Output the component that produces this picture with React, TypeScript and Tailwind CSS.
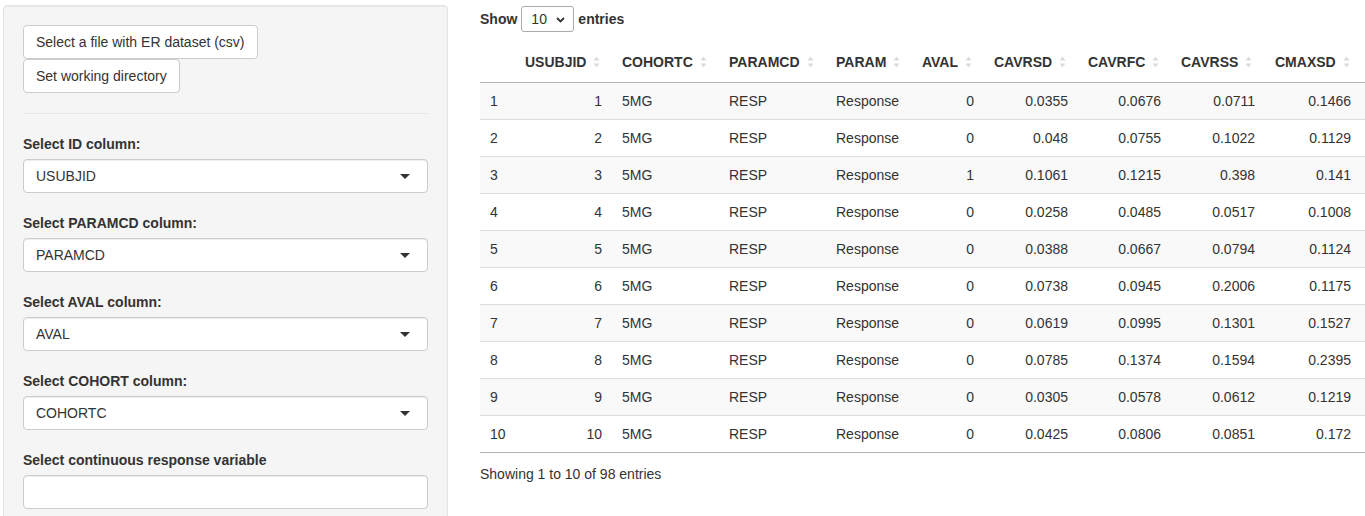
import React from "react";

const font = { fontFamily: '"Liberation Sans", Arial, Helvetica, sans-serif' };

const rows: (string | number)[][] = [
  [1, 1, "5MG", "RESP", "Response", 0, "0.0355", "0.0676", "0.0711", "0.1466"],
  [2, 2, "5MG", "RESP", "Response", 0, "0.048", "0.0755", "0.1022", "0.1129"],
  [3, 3, "5MG", "RESP", "Response", 1, "0.1061", "0.1215", "0.398", "0.141"],
  [4, 4, "5MG", "RESP", "Response", 0, "0.0258", "0.0485", "0.0517", "0.1008"],
  [5, 5, "5MG", "RESP", "Response", 0, "0.0388", "0.0667", "0.0794", "0.1124"],
  [6, 6, "5MG", "RESP", "Response", 0, "0.0738", "0.0945", "0.2006", "0.1175"],
  [7, 7, "5MG", "RESP", "Response", 0, "0.0619", "0.0995", "0.1301", "0.1527"],
  [8, 8, "5MG", "RESP", "Response", 0, "0.0785", "0.1374", "0.1594", "0.2395"],
  [9, 9, "5MG", "RESP", "Response", 0, "0.0305", "0.0578", "0.0612", "0.1219"],
  [10, 10, "5MG", "RESP", "Response", 0, "0.0425", "0.0806", "0.0851", "0.172"],
];

const columns = [
  { name: "", width: "w-[35px]", right: false },
  { name: "USUBJID", width: "w-[97px]", right: true },
  { name: "COHORTC", width: "w-[107px]", right: false },
  { name: "PARAMCD", width: "w-[107px]", right: false },
  { name: "PARAM", width: "w-[86px]", right: false },
  { name: "AVAL", width: "w-[72px]", right: true },
  { name: "CAVRSD", width: "w-[94px]", right: true },
  { name: "CAVRFC", width: "w-[93px]", right: true },
  { name: "CAVRSS", width: "w-[94px]", right: true },
  { name: "CMAXSD", width: "w-[96px]", right: true },
];

function SortIcon() {
  return (
    <svg width="7" height="12" viewBox="0 0 7 12" className="ml-[7px] shrink-0">
      <path d="M3.5 0.5 L6.5 4.5 L0.5 4.5 Z" fill="#dcdcdc" />
      <path d="M3.5 11.5 L6.5 7.5 L0.5 7.5 Z" fill="#dcdcdc" />
    </svg>
  );
}

function SelectBox({ value, caret = true }: { value: string; caret?: boolean }) {
  return (
    <div className="relative h-[34px] w-full rounded-[4px] border border-[#cccccc] bg-white px-[12px] py-[6px] text-[14px] leading-[20px] text-[#333333] shadow-[inset_0_1px_1px_rgba(0,0,0,0.075)]">
      {value}
      {caret && (
        <span className="absolute right-[17px] top-[14px] h-0 w-0 border-x-[5px] border-t-[5px] border-x-transparent border-t-[#333333]" />
      )}
    </div>
  );
}

function Field({ label, value, caret }: { label: string; value: string; caret?: boolean }) {
  return (
    <div className="mb-[20px]">
      <label className="mb-[5px] block text-[14px] font-bold leading-[20px] text-[#333333]">{label}</label>
      <SelectBox value={value} caret={caret} />
    </div>
  );
}

export default function App() {
  return (
    <div className="flex bg-white text-[14px] leading-[20px] text-[#333333]" style={font}>
      <div className="ml-[3px] mt-[5px] w-[445px] shrink-0 rounded-[4px] border border-[#e3e3e3] bg-[#f5f5f5] p-[19px] shadow-[inset_0_1px_1px_rgba(0,0,0,0.05)]">
        <div className="flex flex-col items-start">
          <button className="h-[34px] rounded-[4px] border border-[#cccccc] bg-white px-[12px] text-[14px] text-[#333333]">
            Select a file with ER dataset (csv)
          </button>
          <button className="h-[34px] rounded-[4px] border border-[#cccccc] bg-white px-[12px] text-[14px] text-[#333333]">
            Set working directory
          </button>
        </div>
        <hr className="my-[20px] border-t border-[#e6e6e6]" />
        <Field label="Select ID column:" value="USUBJID" />
        <Field label="Select PARAMCD column:" value="PARAMCD" />
        <Field label="Select AVAL column:" value="AVAL" />
        <Field label="Select COHORT column:" value="COHORTC" />
        <Field label="Select continuous response variable" value="" caret={false} />
      </div>

      <div className="ml-[32px] min-w-0 flex-1 overflow-hidden pt-[6px]">
        <div className="flex items-center font-bold">
          <span>Show</span>
          <div className="relative ml-[4px] mr-[4px] flex h-[26px] w-[53px] items-center rounded-[3px] border border-[#aaaaaa] bg-white pl-[9px] font-normal">
            10
            <svg width="9" height="6" viewBox="0 0 9 6" className="absolute right-[8px] top-[10px]">
              <path d="M1 1 L4.5 4.5 L8 1" fill="none" stroke="#333333" strokeWidth="1.8" />
            </svg>
          </div>
          <span>entries</span>
        </div>

        <table className="mt-[10px] w-full table-fixed border-collapse">
          <thead>
            <tr className="border-b border-[#b3b3b3]">
              {columns.map((c, i) => (
                <th key={i} className={`${c.width} py-[10px] pl-[10px] pr-[10px] text-left font-bold`}>
                  {c.name ? (
                    <div className="flex items-center">
                      <span>{c.name}</span>
                      <SortIcon />
                    </div>
                  ) : (
                    <span>&nbsp;</span>
                  )}
                </th>
              ))}
              <th />
            </tr>
          </thead>
          <tbody>
            {rows.map((r, ri) => (
              <tr
                key={ri}
                className={`${ri % 2 === 0 ? "bg-[#f9f9f9]" : "bg-white"} ${
                  ri === rows.length - 1 ? "border-b border-[#b3b3b3]" : "border-b border-[#dddddd]"
                }`}
              >
                {r.map((v, ci) => (
                  <td
                    key={ci}
                    className={`px-[10px] py-[8px] font-normal whitespace-nowrap ${
                      columns[ci].right ? "text-right" : "text-left"
                    }`}
                  >
                    {v}
                  </td>
                ))}
                <td />
              </tr>
            ))}
          </tbody>
        </table>

        <div className="pt-[11px]">Showing 1 to 10 of 98 entries</div>
      </div>
    </div>
  );
}
